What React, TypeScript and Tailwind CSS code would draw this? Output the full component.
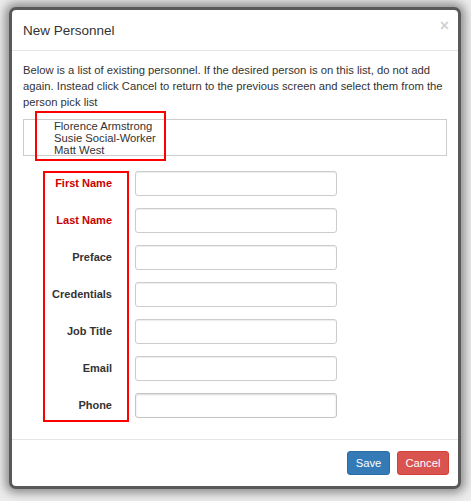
import React from "react";

const existing = ["Florence Armstrong", "Susie Social-Worker", "Matt West"];

const fields = [
  { label: "First Name", required: true },
  { label: "Last Name", required: true },
  { label: "Preface" },
  { label: "Credentials" },
  { label: "Job Title" },
  { label: "Email" },
  { label: "Phone", focused: true },
];

export default function App() {
  return (
    <div
      className="relative w-[471px] h-[501px] overflow-hidden bg-[#ececec] pt-[10px] pl-[12px] text-[#333]"
      style={{ fontFamily: '"Liberation Sans", Arial, sans-serif' }}
    >
      {/* modal */}
      <div className="w-[446px] h-[476px] bg-white rounded-[4px] flex flex-col shadow-[0_0_0_3px_#595959,0_0_10px_7px_rgba(0,0,0,0.4)]">
        <div className="h-[41px] shrink-0 border-b border-[#e5e5e5] pl-[11px] pr-[9px] flex items-center justify-between">
          <h4 className="text-[13.5px] leading-[19px] text-[#333]">New Personnel</h4>
          <span className="text-[16px] font-bold leading-none text-black/20 -mt-[9px]">×</span>
        </div>

        <div className="flex-1 px-[11px] pt-[11px]">
          <p className="text-[11.25px] leading-[16px] mb-[9px]">
            Below is a list of existing personnel. If the desired person is on this list, do not add
            again. Instead click Cancel to return to the previous screen and select them from the
            person pick list
          </p>
          <div className="h-[37px] border border-[#ccc] overflow-hidden">
            <ul className="pl-[30px] text-[11.25px] leading-[12px]">
              {existing.map((name) => (
                <li key={name}>{name}</li>
              ))}
            </ul>
          </div>

          <form className="mt-[15px] flex flex-col gap-[12px]">
            {fields.map((f) => (
              <div key={f.label} className="flex items-center">
                <label
                  className={`w-[89px] text-right text-[11px] font-bold ${
                    f.required ? "text-[#cc0000]" : "text-[#333]"
                  }`}
                >
                  {f.label}
                </label>
                <input
                  type="text"
                  className={`ml-[23px] w-[202px] h-[25px] rounded-[3px] border outline-none ${
                    f.focused
                      ? "border-[#c4c4c4] shadow-[inset_0_1px_2px_rgba(0,0,0,0.15)]"
                      : "border-[#ccc] shadow-[inset_0_1px_1px_rgba(0,0,0,0.075)]"
                  }`}
                />
              </div>
            ))}
          </form>
        </div>

        <div className="h-[47px] shrink-0 border-t border-[#e5e5e5] pl-[11px] pr-[9px] flex items-center justify-end gap-[7px]">
          <button className="h-[24px] w-[43px] rounded-[3px] bg-[#337ab7] border border-[#2e6da4] text-white text-[11.25px]">
            Save
          </button>
          <button className="h-[24px] w-[52px] rounded-[3px] bg-[#d9534f] border border-[#d43f3a] text-white text-[11.25px]">
            Cancel
          </button>
        </div>
      </div>

      {/* red annotation boxes */}
      <div className="absolute left-[35px] top-[111px] w-[131px] h-[50px] border-2 border-[#f00]" />
      <div className="absolute left-[43px] top-[171px] w-[86px] h-[251px] border-2 border-[#f00]" />
    </div>
  );
}
